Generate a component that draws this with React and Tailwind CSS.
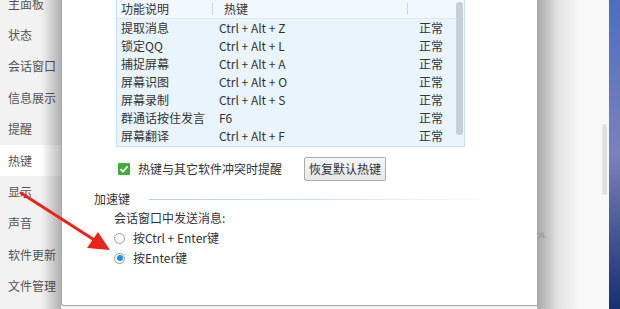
import React from "react";

const menu = ["主面板", "状态", "会话窗口", "信息展示", "提醒", "热键", "显示", "声音", "软件更新", "文件管理"];

const hotkeys = [
  ["提取消息", "Ctrl + Alt + Z"],
  ["锁定QQ", "Ctrl + Alt + L"],
  ["捕捉屏幕", "Ctrl + Alt + A"],
  ["屏幕识图", "Ctrl + Alt + O"],
  ["屏幕录制", "Ctrl + Alt + S"],
  ["群通话按住发言", "F6"],
  ["屏幕翻译", "Ctrl + Alt + F"],
];

function Radio({ checked, label }) {
  return (
    <div className="flex items-center h-[20px]">
      <span className="w-[11px] h-[11px] rounded-full border border-[#9a9a9a] bg-white flex items-center justify-center">
        {checked && <span className="w-[6px] h-[6px] rounded-full bg-[#1296f0]" />}
      </span>
      <span className="ml-[8px]">{label}</span>
    </div>
  );
}

export default function App() {
  return (
    <div
      className="relative w-[620px] h-[309px] overflow-hidden flex bg-[#f2f2f2] text-[12px] text-[#333]"
      style={{ fontFamily: '"Noto Sans CJK SC", "Noto Sans", sans-serif' }}
    >
      {/* background settings menu */}
      <div className="relative w-[61px] shrink-0 flex flex-col">
        <div className="flex flex-col -mt-[12px]">
          {menu.map((m) => (
            <div
              key={m}
              className={`h-[31.4px] flex items-center pl-[8px] text-[#555] ${m === "热键" ? "bg-white" : ""}`}
            >
              {m}
            </div>
          ))}
        </div>
        <div className="absolute top-0 right-0 w-[20px] h-full bg-gradient-to-r from-transparent to-[#00000045]" />
      </div>

      {/* dialog */}
      <div className="relative w-[476px] h-[306px] shrink-0 bg-white border-l border-b border-[#a8a8a8] rounded-bl-[3px] flex flex-col">
        {/* table */}
        <div className="ml-[54px] w-[349px] h-[147px] border border-t-0 border-[#c9dff0] bg-[#e9f4fc] relative">
          <div className="h-[19px] flex items-center bg-[#f2f8fd] border-b border-[#dbeaf5]">
            <span className="w-[95px] pl-[4px]">功能说明</span>
            <span className="w-[1px] h-[12px] bg-[#c4dcee]" />
            <span className="w-[194px] pl-[11px]">热键</span>
            <span className="w-[1px] h-[12px] bg-[#c4dcee]" />
          </div>
          {hotkeys.map(([name, key]) => (
            <div key={name} className="h-[18px] flex items-center">
              <span className="w-[102px] pl-[4px]">{name}</span>
              <span className="w-[200px]">{key}</span>
              <span>正常</span>
            </div>
          ))}
          <div className="absolute right-[1px] top-[2px] w-[7px] h-[133px] rounded-[3px] bg-[#c6ced6]" />
        </div>

        {/* conflict reminder + reset */}
        <div className="mt-[10px] h-[24px] flex items-center">
          <span className="ml-[56px] w-[12px] h-[12px] bg-[#3eae3a] rounded-[1px] flex items-center justify-center">
            <svg width="10" height="10" viewBox="0 0 10 10">
              <path d="M1.5 5.2 L4 7.6 L8.6 2.4" stroke="white" strokeWidth="1.8" fill="none" />
            </svg>
          </span>
          <span className="ml-[8px]">热键与其它软件冲突时提醒</span>
          <button className="ml-[22px] w-[82px] h-[24px] border border-[#acacac] rounded-[2px] bg-gradient-to-b from-[#f7f7f7] to-[#e6e6e6] text-[#333]">
            恢复默认热键
          </button>
        </div>

        {/* accelerator */}
        <div className="mt-[10px] h-[16px] flex items-center">
          <span className="ml-[32px]">加速键</span>
          <span className="ml-[19px] w-[330px] h-[1px] bg-gradient-to-r from-[#b7d3e8] via-[#c9e0f0] to-[#f8fbfd]" />
        </div>
        <div className="ml-[52px] mt-[2px] h-[18px] flex items-center">会话窗口中发送消息:</div>
        <div className="ml-[52px] mt-[1px] flex flex-col">
          <Radio label="按Ctrl + Enter键" />
          <Radio checked label="按Enter键" />
        </div>
      </div>

      {/* area behind dialog on the right */}
      <div className="relative flex-1 flex bg-[#f8f8f8]">
        <div className="w-[44px] h-full bg-gradient-to-r from-[#a9a9a9] via-[#e4e4e4] to-[#f8f8f8]" />
        <div className="flex-1 relative">
          <div className="absolute right-[2px] top-[124px] w-[5px] h-[71px] rounded-full bg-[#e0e0e0]" />
        </div>
        <span className="absolute left-[1px] top-[230px] text-[7px] text-[#888] rotate-90">式</span>
      </div>
      <div className="w-[11px] shrink-0 h-full bg-gradient-to-b from-[#4a6fc0] via-[#7c80bb] to-[#16306e]" />

      {/* red pointer arrow */}
      <svg className="absolute left-0 top-0 pointer-events-none" width="620" height="309">
        <line x1="21" y1="193" x2="96" y2="241" stroke="#e8231b" strokeWidth="3" strokeLinecap="round" />
        <polygon points="110,250 87,248 98,232" fill="#e8231b" />
      </svg>
    </div>
  );
}
